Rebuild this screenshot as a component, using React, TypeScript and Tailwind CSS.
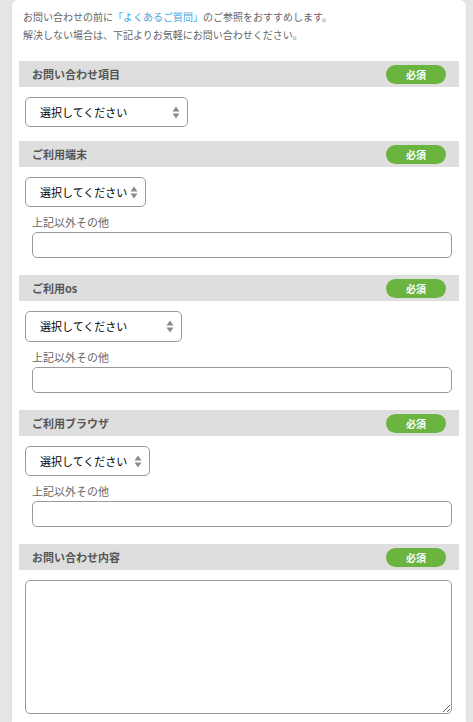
const font = { fontFamily: '"Noto Sans CJK JP", "Noto Sans", sans-serif' };

function Badge() {
  return (
    <span className="flex h-[19px] w-[60px] items-center justify-center rounded-full bg-[#6bb43f] text-[10px] font-bold text-white">
      必須
    </span>
  );
}

function Header({ title }: { title: string }) {
  return (
    <div className="flex h-[26px] items-center justify-between bg-[#dedede] pl-[13px] pr-[13px]">
      <span className="text-[11px] font-bold text-[#555]">{title}</span>
      <Badge />
    </div>
  );
}

function Arrows() {
  return (
    <svg width="8" height="13" viewBox="0 0 8 13" className="shrink-0">
      <path d="M4 0.5 L7.5 5.5 L0.5 5.5 Z" fill="#8c8c8c" />
      <path d="M0.5 7.5 L7.5 7.5 L4 12.5 Z" fill="#8c8c8c" />
    </svg>
  );
}

function Select({ width, tall }: { width: string; tall?: boolean }) {
  return (
    <div
      className={`ml-[6px] mt-[10px] flex items-center justify-between rounded-[5px] border border-[#999] bg-white pl-[14px] pr-[7px] text-[11px] text-black ${width} ${tall ? "h-[31px]" : "h-[30px]"}`}
    >
      <span>選択してください</span>
      <Arrows />
    </div>
  );
}

function Other() {
  return (
    <>
      <p className="ml-[13px] mt-[8px] text-[11px] leading-[14px] text-[#666]">上記以外その他</p>
      <input
        type="text"
        className="ml-[13px] mr-[7px] mt-[3px] block h-[26px] w-[420px] rounded-[5px] border border-[#999] bg-white"
      />
    </>
  );
}

export default function App() {
  return (
    <div className="min-h-[722px] bg-[#e6e6e6]" style={font}>
      <div className="ml-[12px] min-h-[722px] w-[454px] rounded-t-[6px] bg-white px-[7px] shadow-[0_0_4px_rgba(0,0,0,0.06)]">
        <div className="px-[4px] pt-[8px] text-[10px] leading-[18px] text-[#666]">
          <p>
            お問い合わせの前に<span className="text-[#41a9df]">「よくあるご質問」</span>のご参照をおすすめします。
          </p>
          <p>解決しない場合は、下記よりお気軽にお問い合わせください。</p>
        </div>

        <div className="mt-[17px]">
          <Header title="お問い合わせ項目" />
          <Select width="w-[163px]" />
        </div>

        <div className="mt-[14px]">
          <Header title="ご利用端末" />
          <Select width="w-[121px]" />
          <Other />
        </div>

        <div className="mt-[17px]">
          <Header title="ご利用os" />
          <Select width="w-[157px]" tall />
          <Other />
        </div>

        <div className="mt-[17px]">
          <Header title="ご利用ブラウザ" />
          <Select width="w-[125px]" />
          <Other />
        </div>

        <div className="mt-[17px]">
          <Header title="お問い合わせ内容" />
          <textarea className="ml-[6px] mt-[10px] block h-[134px] w-[427px] rounded-[5px] border border-[#999] bg-white" />
        </div>
      </div>
    </div>
  );
}
